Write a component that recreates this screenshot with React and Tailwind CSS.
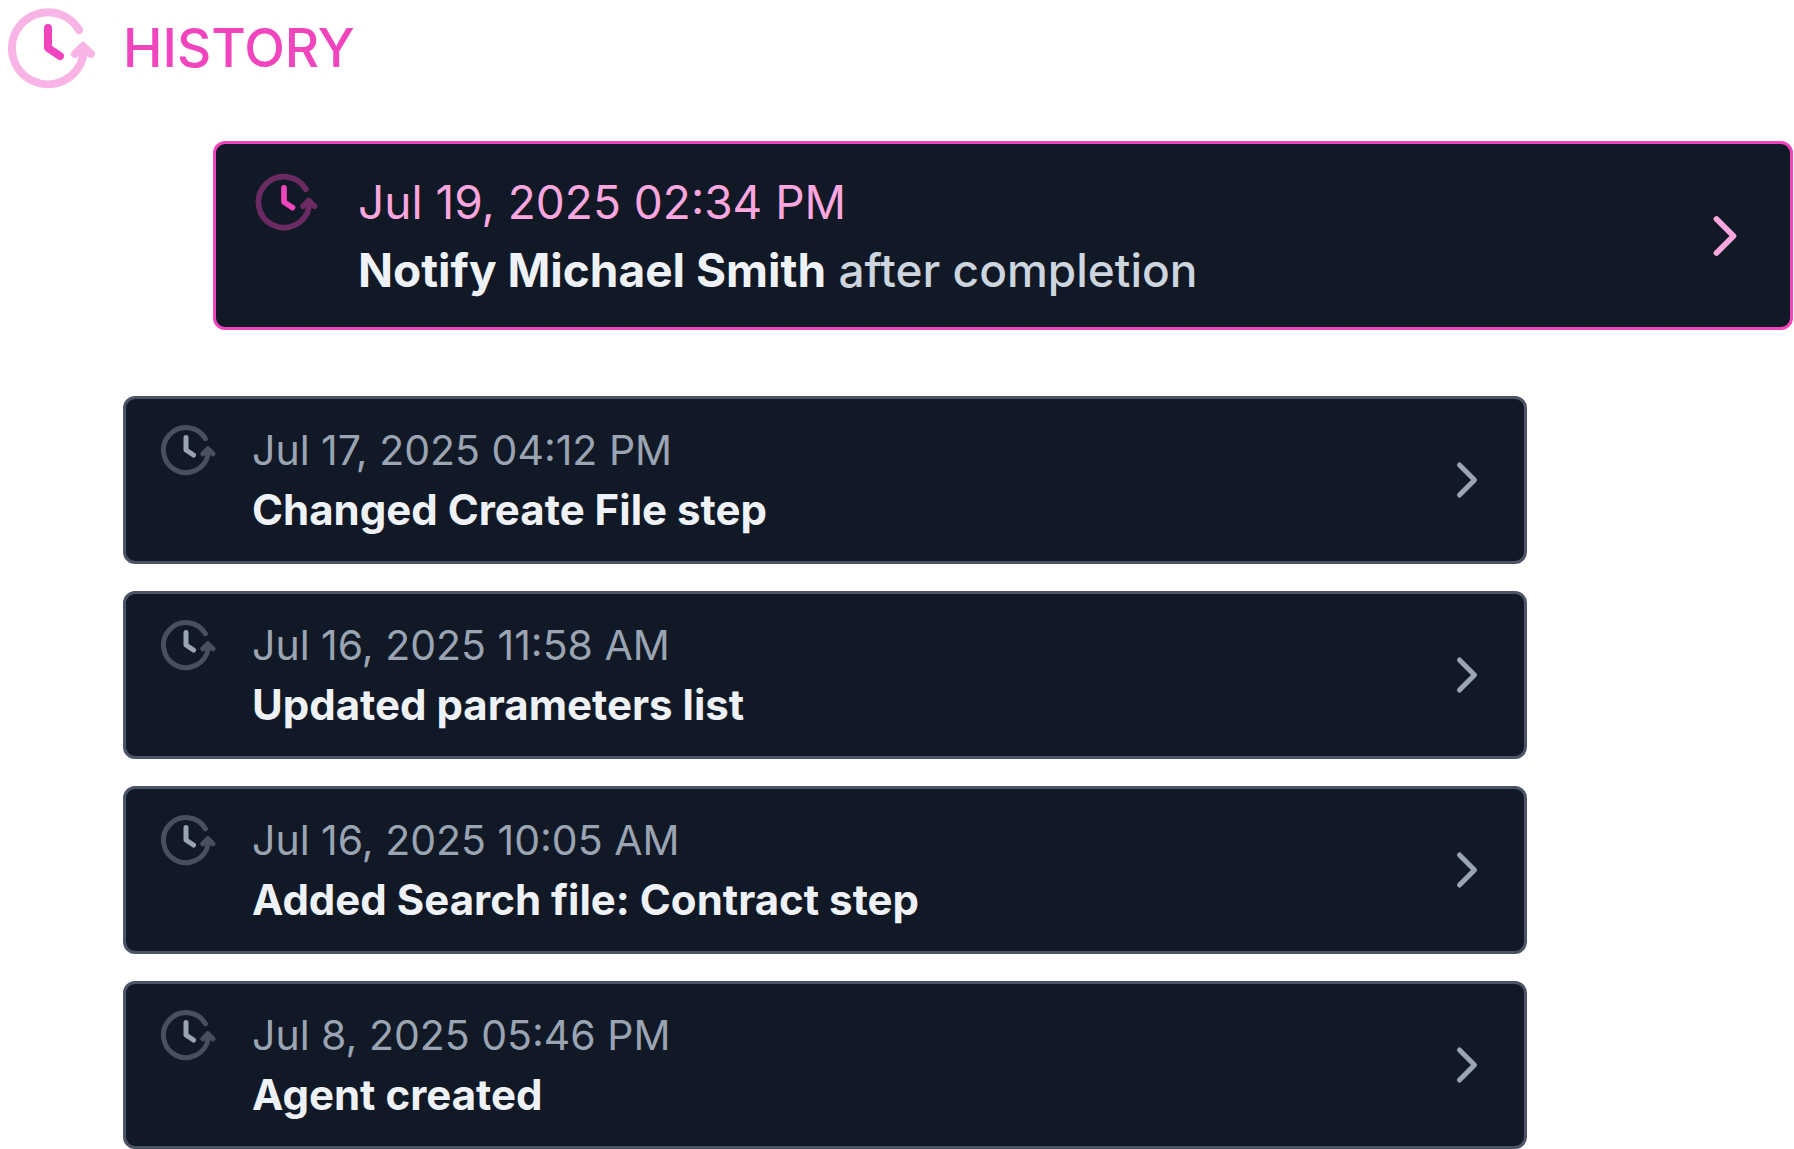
import React from 'react';
import { ChevronRight } from 'lucide-react';
import clsx from 'clsx';

const latest = {
  date: 'Jul 19, 2025 02:34 PM',
  title: 'Notify Michael Smith',
  detail: 'after completion',
};

const entries = [
  { date: 'Jul 17, 2025 04:12 PM', title: 'Changed Create File step' },
  { date: 'Jul 16, 2025 11:58 AM', title: 'Updated parameters list' },
  { date: 'Jul 16, 2025 10:05 AM', title: 'Added Search file: Contract step' },
  { date: 'Jul 8, 2025 05:46 PM', title: 'Agent created' },
];

const HistoryIcon = ({ className }) => (
  <svg
    viewBox="0 0 96 96"
    fill="none"
    stroke="currentColor"
    strokeWidth="8"
    strokeLinecap="round"
    strokeLinejoin="round"
    className={clsx('shrink-0', className)}
    aria-hidden="true"
  >
    <g opacity="0.4">
      <path d="M79 30A36 36 0 1 0 83.3 55" />
      <path d="M75 54L83 46L91 54Z" fill="currentColor" strokeWidth="0" />
      <path d="M75 54L83 46L91 54" />
    </g>
    <path d="M48 28V48L60 56" />
  </svg>
);

const HistoryCard = ({ entry, active }) => (
  <button
    type="button"
    className={clsx(
      'flex w-full items-center rounded-xl border-3 bg-[#121926] text-left cursor-pointer',
      active
        ? 'border-[#f045bd] pt-6 pb-[23px] pl-[34px] pr-[31px] leading-[68px]'
        : 'border-[#4b5565] py-[21px] pl-[30px] pr-[27px] leading-[60px]'
    )}
  >
    <HistoryIcon
      className={clsx('self-start', active ? 'size-[68px] text-[#f045bd]' : 'size-[60px] text-[#9aa4b2]')}
    />
    <span className={clsx('flex-1 min-w-0', active ? 'ml-10' : 'ml-9')}>
      <span className={clsx('block', active ? 'text-[46px] text-[#fba6de]' : 'text-[41px] text-[#9aa4b2]')}>
        {entry.date}
      </span>
      <span className={clsx('block font-medium text-[#cdd5df]', active ? 'text-[46px]' : 'text-[42px]')}>
        <strong className="font-bold text-[#eef2f6]">{entry.title}</strong>
        {entry.detail && ` ${entry.detail}`}
      </span>
    </span>
    <ChevronRight
      className={clsx('shrink-0', active ? 'size-[68px] text-[#fba6de]' : 'size-[60px] text-[#9aa4b2]')}
    />
  </button>
);

const App = () => {
  return (
    <main className="bg-white font-['Inter',sans-serif]">
      <header className="flex items-center gap-[27px] text-[#f045bd]">
        <HistoryIcon className="size-24" />
        <h1 className="text-[53px] leading-[60px] font-medium">HISTORY</h1>
      </header>

      <section className="mt-[45px] ml-[213px] mr-px">
        <HistoryCard entry={latest} active />
      </section>

      <ul className="mt-[66px] ml-[123px] mr-[267px] flex flex-col gap-[27px]">
        {entries.map((entry) => (
          <li key={entry.date}>
            <HistoryCard entry={entry} />
          </li>
        ))}
      </ul>
    </main>
  );
};

export default App;
